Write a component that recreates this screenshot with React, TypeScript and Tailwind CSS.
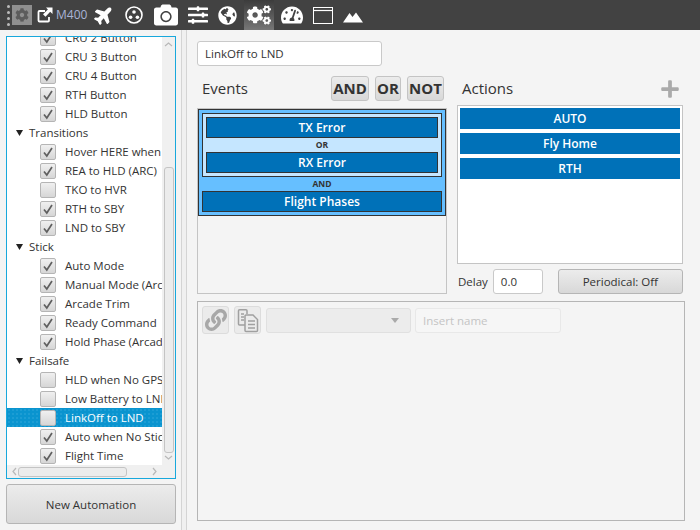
import React from "react";
import { FaPlane, FaCamera, FaSlidersH, FaGlobeAmericas, FaCogs, FaTachometerAlt, FaCog, FaLink, FaPlus } from "react-icons/fa";

type Row = { t: string; c?: boolean; h?: boolean; s?: boolean };
const rows: Row[] = [
  { t: "CRU 2 Button", c: true },
  { t: "CRU 3 Button", c: true },
  { t: "CRU 4 Button", c: true },
  { t: "RTH Button", c: true },
  { t: "HLD Button", c: true },
  { t: "Transitions", h: true },
  { t: "Hover HERE when", c: true },
  { t: "REA to HLD (ARC)", c: true },
  { t: "TKO to HVR" },
  { t: "RTH to SBY", c: true },
  { t: "LND to SBY", c: true },
  { t: "Stick", h: true },
  { t: "Auto Mode", c: true },
  { t: "Manual Mode (Arcade)", c: true },
  { t: "Arcade Trim", c: true },
  { t: "Ready Command", c: true },
  { t: "Hold Phase (Arcade)", c: true },
  { t: "Failsafe", h: true },
  { t: "HLD when No GPS" },
  { t: "Low Battery to LND" },
  { t: "LinkOff to LND", s: true },
  { t: "Auto when No Stick", c: true },
  { t: "Flight Time", c: true },
];

function Check({ on }: { on?: boolean }) {
  return (
    <span className="w-[16px] h-[16px] shrink-0 rounded-[2px] border border-[#b5b5b5] bg-gradient-to-b from-[#f0f0f0] to-[#d6d6d6] flex items-center justify-center">
      {on && (
        <svg width="12" height="12" viewBox="0 0 12 12" fill="none">
          <path d="M2 6.5 L4.8 10 L10 2" stroke="#5f5f5f" strokeWidth="1.7" />
        </svg>
      )}
    </span>
  );
}

function ListRow({ r }: { r: Row }) {
  if (r.h)
    return (
      <div className="h-[19px] flex items-center pl-[9px] text-[#333] whitespace-nowrap">
        <svg width="7" height="6" viewBox="0 0 7 6" className="mr-[6px]"><path d="M0 0H7L3.5 6Z" fill="#222" /></svg>
        {r.t}
      </div>
    );
  return (
    <div className={`h-[19px] flex items-center pl-[33px] whitespace-nowrap ${r.s ? "text-white bg-[#0a94cf] bg-[radial-gradient(#1c9dd4_1px,transparent_1px)] bg-[length:4px_4px]" : "text-[#333]"}`}>
      <Check on={r.c} />
      <span className="ml-[9px]">{r.t}</span>
    </div>
  );
}

function Chevron({ d }: { d: string }) {
  return (
    <svg width="9" height="9" viewBox="0 0 9 9" fill="none" className="shrink-0"><path d={d} stroke="#b8b8b8" strokeWidth="1.2" /></svg>
  );
}

function Block({ t }: { t: string }) {
  return (
    <div className="h-[21px] shrink-0 bg-[#0071b8] border border-[#333] text-white font-semibold text-[12px] flex items-center justify-center">
      {t}
    </div>
  );
}

function Action({ t }: { t: string }) {
  return <div className="h-[21px] shrink-0 bg-[#0071b8] text-white font-semibold text-[12px] flex items-center justify-center">{t}</div>;
}

function LogicBtn({ t, w }: { t: string; w: string }) {
  return (
    <div className={`${w} h-[25px] rounded-[3px] border border-[#c4c4c4] bg-gradient-to-b from-[#ececec] to-[#d8d8d8] flex items-center justify-center text-[#333] font-bold text-[15px]`}>
      {t}
    </div>
  );
}

export default function App() {
  return (
    <div className="w-[700px] h-[530px] overflow-hidden bg-[#f4f4f4] flex flex-col text-[11.5px]" style={{ fontFamily: '"Open Sans", "Noto Sans", sans-serif' }}>
      {/* top bar */}
      <div className="h-[30px] shrink-0 bg-[#424242] flex items-center text-white">
        <div className="ml-[7px] w-[3px] flex flex-col gap-[3px]">
          <span className="w-[3px] h-[3px] rounded-full bg-[#bbb]" />
          <span className="w-[3px] h-[3px] rounded-full bg-[#bbb]" />
          <span className="w-[3px] h-[3px] rounded-full bg-[#bbb]" />
          <span className="w-[3px] h-[3px] rounded-full bg-[#bbb]" />
        </div>
        <div className="ml-[2px] w-[20px] h-[20px] bg-[#8f8f8f] flex items-center justify-center">
          <FaCog size={14} color="#5c5c5c" />
        </div>
        <div className="ml-[5px] w-[15px]">
          <svg width="16" height="16" viewBox="0 0 16 16" fill="none">
            <path d="M8 4H2.5A1 1 0 0 0 1.5 5V13.5A1 1 0 0 0 2.5 14.5H11A1 1 0 0 0 12 13.5V10" stroke="white" strokeWidth="1.8" />
            <path d="M9 0.5H15.5V7L13.2 4.8L8.5 9.8L6 7.2L10.9 2.4Z" fill="white" />
          </svg>
        </div>
        <span className="ml-[4px] w-[32px] text-[12px] text-[#a9b4d6]">M400</span>
        <div className="ml-[6px]"><FaPlane size={20} style={{ transform: "rotate(-45deg)" }} /></div>
        <div className="ml-[11px]">
          <svg width="18" height="18" viewBox="0 0 18 18" fill="none">
            <circle cx="9" cy="9" r="8" stroke="white" strokeWidth="1.6" />
            <circle cx="9" cy="6" r="1.8" fill="white" />
            <circle cx="5.6" cy="11.2" r="1.8" fill="white" />
            <circle cx="12.4" cy="11.2" r="1.8" fill="white" />
          </svg>
        </div>
        <div className="ml-[11px]"><FaCamera size={24} /></div>
        <div className="ml-[10px]"><FaSlidersH size={20} /></div>
        <div className="ml-[10px]"><FaGlobeAmericas size={19} /></div>
        <div className="ml-[7px] w-[30px] h-[30px] bg-gradient-to-b from-[#3c3c3c] to-[#777] flex items-center justify-center">
          <FaCogs size={24} />
        </div>
        <div className="ml-[7px]"><FaTachometerAlt size={22} /></div>
        <div className="ml-[10px]">
          <svg width="20" height="17" viewBox="0 0 20 17" fill="none">
            <rect x="0.5" y="0.5" width="19" height="16" stroke="white" />
            <path d="M1 3.5H19" stroke="white" strokeWidth="1.2" />
          </svg>
        </div>
        <div className="ml-[10px] mt-[4px]">
          <svg width="20" height="11" viewBox="0 0 20 11"><path d="M0 10.5L6.5 1L9.5 5L13 0.5L20 10.5Z" fill="white" /></svg>
        </div>
      </div>

      <div className="flex-1 flex min-h-0">
        {/* left */}
        <div className="w-[181px] shrink-0 pl-[6px] pr-[5px] pt-[6px] pb-[6px] flex flex-col gap-[5px]">
          <div className="h-[443px] border border-[#18a8dc] bg-white relative overflow-hidden">
            <div className="mt-[-9px] mr-[13px] overflow-hidden">
              {rows.map((r) => <ListRow key={r.t} r={r} />)}
            </div>
            {/* vertical scrollbar */}
            <div className="absolute top-0 right-0 bottom-0 w-[13px] bg-[#f0f0f0] flex flex-col items-center pt-[3px]">
              <Chevron d="M1 6 L4.5 3 L8 6" />
              <div className="mt-[118px] w-[10px] h-[286px] rounded-[3px] border border-[#c4c4c4] bg-[#ececec]" />
              <Chevron d="M1 3 L4.5 6 L8 3" />
            </div>
            {/* horizontal scrollbar */}
            <div className="absolute left-0 right-[13px] bottom-0 h-[13px] bg-[#f0f0f0] flex items-center px-[3px]">
              <Chevron d="M6 1 L3 4.5 L6 8" />
              <div className="ml-[-1px] w-[109px] h-[10px] rounded-[3px] border border-[#c4c4c4] bg-[#ececec]" />
              <div className="flex-1" />
              <Chevron d="M3 1 L6 4.5 L3 8" />
            </div>
          </div>
          <div className="h-[40px] pt-[2px] rounded-[3px] border border-[#b5b5b5] bg-gradient-to-b from-[#ececec] to-[#d8d8d8] flex items-center justify-center text-[#333]">
            New Automation
          </div>
        </div>
        {/* divider */}
        <div className="w-[6px] shrink-0 bg-[#f0f0f0] border-x border-[#d4d4d4]" />
        {/* right */}
        <div className="flex-1 min-w-0 pl-[10px] pr-[17px] pt-[11px] flex flex-col">
          <div className="w-[185px] h-[25px] rounded-[3px] border border-[#c9c9c9] bg-white flex items-center pl-[7px] text-[#333]">LinkOff to LND</div>
          <div className="flex gap-[10px] mt-[10px]">
            <div className="w-[250px] shrink-0 flex flex-col">
              <div className="h-[25px] flex items-center">
                <span className="ml-[5px] text-[15px] text-[#333]">Events</span>
                <div className="flex-1" />
                <div className="flex gap-[6px] mr-[3px]">
                  <LogicBtn t="AND" w="w-[38px]" />
                  <LogicBtn t="OR" w="w-[26px]" />
                  <LogicBtn t="NOT" w="w-[37px]" />
                </div>
              </div>
              <div className="h-[186px] mt-[7px] border border-[#c4c4c4]">
                <div className="h-[107px] border border-[#333] bg-[#66bfff] p-[3px] flex flex-col">
                  <div className="h-[64px] shrink-0 border border-[#333] bg-[#c5e6ff] p-[3px] flex flex-col">
                    <Block t="TX Error" />
                    <div className="h-[14px] shrink-0 flex items-center justify-center font-bold text-[8.5px] text-[#333]">OR</div>
                    <Block t="RX Error" />
                  </div>
                  <div className="h-[14px] shrink-0 flex items-center justify-center font-bold text-[8.5px] text-[#333]">AND</div>
                  <Block t="Flight Phases" />
                </div>
              </div>
            </div>
            <div className="w-[226px] shrink-0 flex flex-col">
              <div className="h-[25px] flex items-center justify-between">
                <span className="ml-[5px] text-[15px] text-[#333]">Actions</span>
                <FaPlus size={20} color="#aaaaaa" className="mr-[3px]" />
              </div>
              <div className="h-[159px] mt-[4px] border border-[#c4c4c4] bg-white px-[2px] py-[2px] flex flex-col gap-[4px]">
                <Action t="AUTO" />
                <Action t="Fly Home" />
                <Action t="RTH" />
              </div>
              <div className="h-[25px] mt-[5px] flex items-center">
                <span className="ml-[1px] text-[#333]">Delay</span>
                <div className="ml-[5px] w-[50px] h-[25px] rounded-[3px] border border-[#c9c9c9] bg-white flex items-center pl-[7px] text-[#333]">0.0</div>
                <div className="ml-[15px] w-[125px] h-[25px] rounded-[3px] border border-[#b5b5b5] bg-gradient-to-b from-[#ececec] to-[#d8d8d8] flex items-center justify-center text-[#333]">Periodical: Off</div>
              </div>
            </div>
          </div>
          <div className="mt-[7px] h-[220px] border border-[#b5b5b5] flex items-start gap-[5px] pl-[4px] pt-[4px] -mr-[2px]">
            <div className="w-[27px] h-[28px] rounded-[3px] border border-[#dcdcdc] bg-[#ebebeb] flex items-center justify-center"><FaLink size={22} color="#a8a8a8" /></div>
            <div className="w-[27px] h-[28px] rounded-[3px] border border-[#dcdcdc] bg-[#ebebeb] flex items-center justify-center">
              <svg width="24" height="25" viewBox="0 0 24 25" fill="none" stroke="#a0a0a0" strokeWidth="1.5">
                <path d="M9 17H3.5A1 1 0 0 1 2.5 16V2.8A1 1 0 0 1 3.5 1.8H10A1 1 0 0 1 11 2.8V6" />
                <path d="M5 6H8M5 9H8M5 12H8" />
                <path d="M10 7H17L21.5 11.5V22.5A1 1 0 0 1 20.5 23.5H10A1 1 0 0 1 9 22.5V8A1 1 0 0 1 10 7Z" fill="#ebebeb" />
                <path d="M12 13H19M12 16.5H19M12 20H19" />
              </svg>
            </div>
            <div className="w-[145px] h-[25px] mt-[2px] rounded-[3px] border border-[#e0e0e0] bg-[#ececec] flex items-center justify-end pr-[11px]">
              <svg width="8" height="5" viewBox="0 0 8 5"><path d="M0 0H8L4 5Z" fill="#aaa" /></svg>
            </div>
            <div className="w-[146px] h-[25px] mt-[2px] -ml-[1px] rounded-[3px] border border-[#e8e8e8] bg-[#f6f6f6] flex items-center pl-[7px] text-[#c4c4c4]">Insert name</div>
          </div>
        </div>
      </div>
    </div>
  );
}
